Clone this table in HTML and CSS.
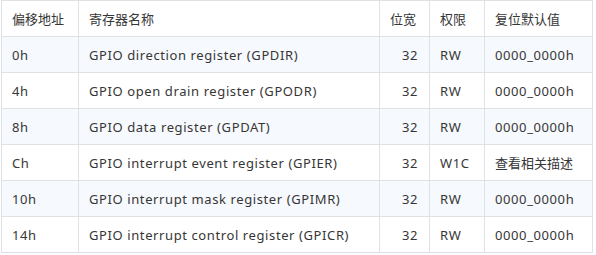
FILE: index.html
```html
<!DOCTYPE html>
<html lang="zh">
<head>
<meta charset="utf-8">
<link rel="stylesheet" href="styles.css">
</head>
<body>
<table class="reg-table">
  <colgroup>
    <col class="c-off">
    <col class="c-name">
    <col class="c-width">
    <col class="c-acc">
    <col class="c-rst">
  </colgroup>
  <thead>
    <tr>
      <th>偏移地址</th>
      <th>寄存器名称</th>
      <th>位宽</th>
      <th>权限</th>
      <th>复位默认值</th>
    </tr>
  </thead>
  <tbody>
    <tr class="odd">
      <td>0h</td>
      <td>GPIO direction register (GPDIR)</td>
      <td class="num">32</td>
      <td>RW</td>
      <td>0000_0000h</td>
    </tr>
    <tr>
      <td>4h</td>
      <td>GPIO open drain register (GPODR)</td>
      <td class="num">32</td>
      <td>RW</td>
      <td>0000_0000h</td>
    </tr>
    <tr class="odd">
      <td>8h</td>
      <td>GPIO data register (GPDAT)</td>
      <td class="num">32</td>
      <td>RW</td>
      <td>0000_0000h</td>
    </tr>
    <tr>
      <td>Ch</td>
      <td>GPIO interrupt event register (GPIER)</td>
      <td class="num">32</td>
      <td>W1C</td>
      <td class="cjk">查看相关描述</td>
    </tr>
    <tr class="odd">
      <td>10h</td>
      <td>GPIO interrupt mask register (GPIMR)</td>
      <td class="num">32</td>
      <td>RW</td>
      <td>0000_0000h</td>
    </tr>
    <tr>
      <td>14h</td>
      <td>GPIO interrupt control register (GPICR)</td>
      <td class="num">32</td>
      <td>RW</td>
      <td>0000_0000h</td>
    </tr>
  </tbody>
</table>
</body>
</html>
```
FILE: styles.css
```css
html, body {
  margin: 0;
  padding: 0;
  background: #ffffff;
}

.reg-table {
  margin-left: 1px;
  border-collapse: collapse;
  table-layout: fixed;
  width: 592px;
  font-family: "Noto Sans", "Noto Sans CJK SC", sans-serif;
  font-size: 13px;
  letter-spacing: 0.6px;
  color: #363636;
}

.c-off { width: 77px; }
.c-name { width: 301px; }
.c-width { width: 50px; }
.c-acc { width: 55px; }
.c-rst { width: 108px; }

.reg-table tr {
  height: 36px;
}

.reg-table th,
.reg-table td {
  border: 1px solid #dfe2e5;
  padding: 0 10px;
  text-align: left;
  font-weight: normal;
  white-space: nowrap;
  vertical-align: middle;
}

.reg-table th,
.reg-table td.cjk {
  letter-spacing: 0;
}

.reg-table tr.odd td {
  background: #f6f9fd;
}

.reg-table td.num {
  text-align: right;
  padding-right: 11px;
}
```
